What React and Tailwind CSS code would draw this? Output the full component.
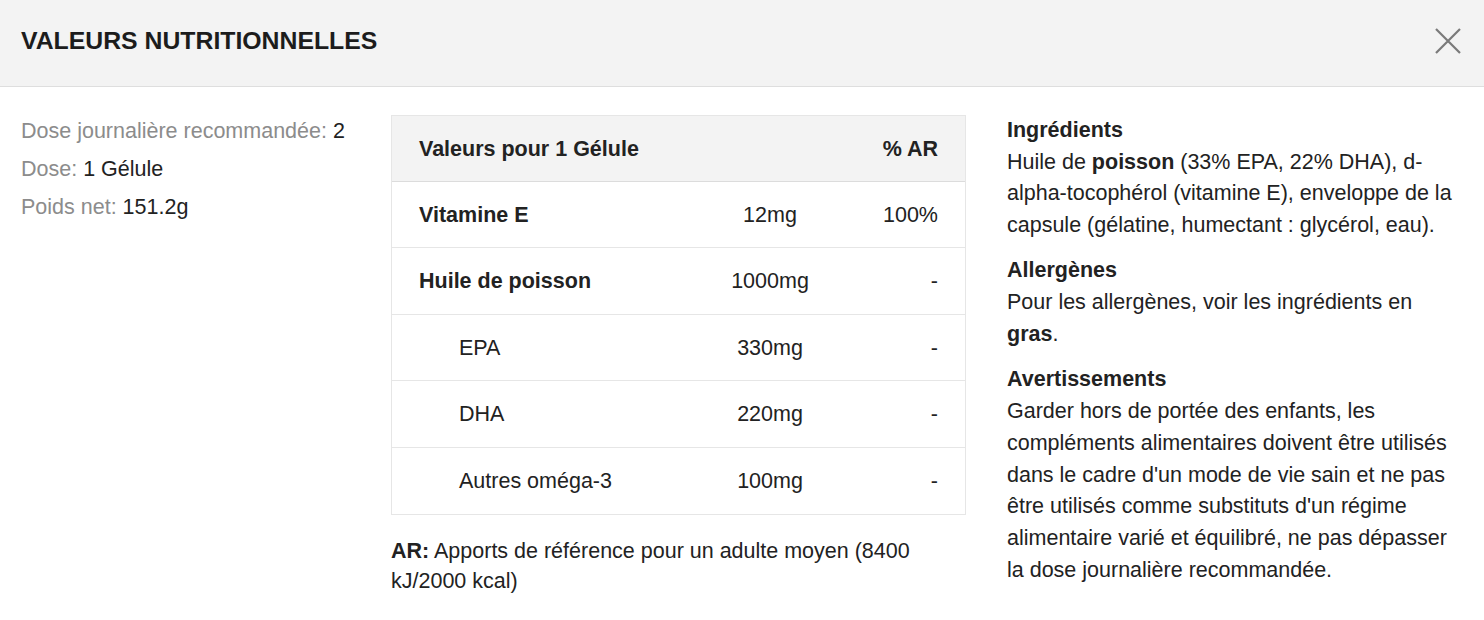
import React from "react";

const rows = [
  { name: "Vitamine E", amount: "12mg", ar: "100%", bold: true },
  { name: "Huile de poisson", amount: "1000mg", ar: "-", bold: true },
  { name: "EPA", amount: "330mg", ar: "-", indent: true },
  { name: "DHA", amount: "220mg", ar: "-", indent: true },
  { name: "Autres oméga-3", amount: "100mg", ar: "-", indent: true },
];

export default function App() {
  return (
    <div
      className="w-[1484px] h-[620px] bg-white text-[#222] overflow-hidden"
      style={{ fontFamily: '"Liberation Sans", Arial, Helvetica, sans-serif' }}
    >
      <div className="h-[87px] bg-[#f3f3f3] border-b border-[#dedede] flex items-center justify-between pl-[21px] pr-[22px]">
        <h1 className="text-[24.8px] font-bold text-[#1c1c1c] leading-none mt-[-4px]">
          VALEURS NUTRITIONNELLES
        </h1>
        <button className="w-[28px] h-[28px] flex items-center justify-center mt-[-4px]">
          <svg width="26" height="26" viewBox="0 0 26 26" fill="none">
            <path d="M1 1 L25 25 M25 1 L1 25" stroke="#7a7a7a" strokeWidth="2.2" />
          </svg>
        </button>
      </div>

      <div className="grid grid-cols-[329px_575px_1fr] gap-x-[41px] pl-[21px] pr-[21px] pt-[28px] text-[21.5px]">
        <div className="leading-[38px]">
          <div className="mt-[-3px]">
            <span className="text-[#8c8c8c]">Dose journalière recommandée:</span> 2
          </div>
          <div>
            <span className="text-[#8c8c8c]">Dose:</span> 1 Gélule
          </div>
          <div>
            <span className="text-[#8c8c8c]">Poids net:</span> 151.2g
          </div>
        </div>

        <div>
          <div className="border border-[#e6e6e6]">
            <div className="h-[66px] bg-[#f3f3f3] border-b border-[#dcdcdc] flex items-center px-[27px] pt-[1px] font-bold">
              <div className="flex-1">Valeurs pour 1 Gélule</div>
              <div className="w-[110px] text-right">% AR</div>
            </div>
            {rows.map((r, i) => (
              <div
                key={r.name}
                className={
                  "h-[66.4px] flex items-center px-[27px] pt-[1px] " +
                  (i < rows.length - 1 ? "border-b border-[#e6e6e6]" : "")
                }
              >
                <div className={"flex-1 " + (r.bold ? "font-bold" : "") + (r.indent ? " pl-[40px]" : "")}>
                  {r.name}
                </div>
                <div className="w-[116px] text-center">{r.amount}</div>
                <div className="w-[110px] text-right">{r.ar}</div>
              </div>
            ))}
          </div>
          <p className="mt-[21px] leading-[30.5px] pr-[40px]">
            <span className="font-bold">AR:</span> Apports de référence pour un adulte moyen (8400 kJ/2000 kcal)
          </p>
        </div>

        <div className="leading-[31.7px]">
          <h3 className="font-bold">Ingrédients</h3>
          <p>
            Huile de <span className="font-bold">poisson</span> (33% EPA, 22% DHA), d-alpha-tocophérol (vitamine E), enveloppe de la capsule (gélatine, humectant : glycérol, eau).
          </p>
          <h3 className="font-bold mt-[13.5px]">Allergènes</h3>
          <p>
            Pour les allergènes, voir les ingrédients en <span className="font-bold">gras</span>.
          </p>
          <h3 className="font-bold mt-[14px]">Avertissements</h3>
          <p>
            Garder hors de portée des enfants, les compléments alimentaires doivent être utilisés dans le cadre d'un mode de vie sain et ne pas être utilisés comme substituts d'un régime alimentaire varié et équilibré, ne pas dépasser la dose journalière recommandée.
          </p>
        </div>
      </div>
    </div>
  );
}
